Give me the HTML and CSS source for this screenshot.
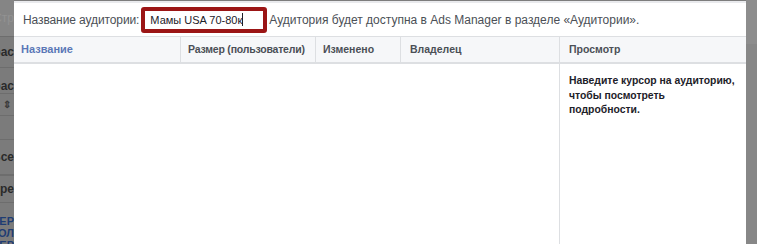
FILE: index.html
```html
<!DOCTYPE html>
<html lang="ru">
<head>
    <meta charset="UTF-8">
    <title>Сохранить аудиторию</title>
    <link rel="stylesheet" href="styles.css">
</head>
<body>
    <div class="page">
        <div class="side side-left">
            <div class="side-row faded">Стр</div>
            <div class="side-row r2">рас</div>
            <div class="side-row r3">рас</div>
            <div class="side-row r4">⇕</div>
            <div class="side-row r5"></div>
            <div class="side-row r6">Все</div>
            <div class="side-row r7">ере</div>
            <div class="side-row blue">ЕР<br>ОЛ<br>ЕР</div>
        </div>

        <div class="modal">
            <div class="name-row">
                <span class="label">Название аудитории:</span>
                <div class="name-input">Мамы USA 70-80к<span class="caret"></span></div>
                <span class="hint">Аудитория будет доступна в Ads Manager в разделе «Аудитории».</span>
            </div>

            <div class="table">
                <div class="list">
                    <div class="head">
                        <div class="col col-name">Название</div>
                        <div class="col col-size">Размер (пользователи)</div>
                        <div class="col col-date">Изменено</div>
                        <div class="col col-owner">Владелец</div>
                    </div>
                </div>
                <div class="preview">
                    <div class="head">
                        <div class="col">Просмотр</div>
                    </div>
                    <p class="preview-text">Наведите курсор на аудиторию, чтобы посмотреть подробности.</p>
                </div>
            </div>
        </div>

        <div class="side side-right"></div>
    </div>
</body>
</html>
```

FILE: styles.css
```css
body {
    margin: 0;
    padding: 0;
    font-family: "Liberation Sans", Arial, sans-serif;
    background: #7d7d7d;
}
.page {
    display: flex;
    height: 244px;
    overflow: hidden;
}
.side {
    background: #7b7b7b;
    flex-shrink: 0;
}
.side-left {
    width: 14px;
    overflow: hidden;
    font-size: 12px;
    font-weight: bold;
    color: #2a2a2a;
    white-space: nowrap;
}
.side-row {
    display: flex;
    justify-content: flex-end;
    align-items: center;
    width: 40px;
    margin-left: -26px;
    border-bottom: 1px solid #6d6d6d;
}
.side-row.faded {
    height: 36px;
    color: #929292;
    font-weight: normal;
    background: #858585;
}
.side-row.r2 { height: 30px; }
.side-row.r3 { height: 25px; align-items: flex-end; }
.side-row.r4 { height: 22px; font-size: 10px; justify-content: center; padding-left: 26px; box-sizing: border-box; color: #3a3a3a; }
.side-row.r5 { height: 23px; }
.side-row.r6 { height: 34px; border-bottom-width: 2px; }
.side-row.r7 { height: 26px; }
.side-row.blue {
    color: #1f3d73;
    border-bottom: none;
    font-size: 11px;
    line-height: 12px;
    padding-top: 12px;
    align-items: flex-start;
    text-align: right;
}
.side-right {
    width: 11px;
    background: #878787;
    border-top: 44px solid #8d8d8d;
}
.modal {
    flex: 1;
    background: #fff;
    border-top: 2px solid #e9eaed;
    margin-top: 1px;
    display: flex;
    flex-direction: column;
}
.name-row {
    display: flex;
    align-items: center;
    height: 33px;
    padding-left: 9px;
    font-size: 12px;
    color: #4b4f56;
    white-space: nowrap;
}
.label {
    margin-right: 2px;
    letter-spacing: -0.1px;
}
.name-input {
    width: 113px;
    height: 18px;
    border: 4px solid #9b1515;
    border-radius: 3px;
    padding: 0 0 0 5px;
    font-size: 11px;
    line-height: 18px;
    color: #1d2129;
    margin-right: 2px;
}
.caret {
    display: inline-block;
    width: 1px;
    height: 13px;
    background: #1d2129;
    vertical-align: -2px;
}
.table {
    flex: 1;
    display: flex;
}
.list {
    width: 545px;
}
.preview {
    flex: 1;
    border-left: 1px solid #dddfe2;
}
.head {
    display: flex;
    height: 25px;
    background: #f6f7f9;
    border-top: 1px solid #dddfe2;
    border-bottom: 2px solid #dddfe2;
    font-size: 10.5px;
    font-weight: bold;
    color: #4b4f56;
    white-space: nowrap;
}
.col {
    line-height: 25px;
    padding-left: 9px;
    box-sizing: border-box;
}
.col-name {
    width: 166px;
    color: #5b77b7;
    padding-left: 7px;
    font-size: 11px;
}
.col-size {
    width: 135px;
    border-left: 1px solid #dddfe2;
    padding-left: 7px;
    letter-spacing: -0.2px;
}
.col-date {
    width: 85px;
    border-left: 1px solid #dddfe2;
    padding-left: 7px;
}
.col-owner {
    flex: 1;
    border-left: 1px solid #dddfe2;
}
.preview-text {
    margin: 10px 0 0 9px;
    width: 168px;
    font-size: 10.4px;
    font-weight: bold;
    line-height: 14.5px;
    color: #1d2129;
}
```
